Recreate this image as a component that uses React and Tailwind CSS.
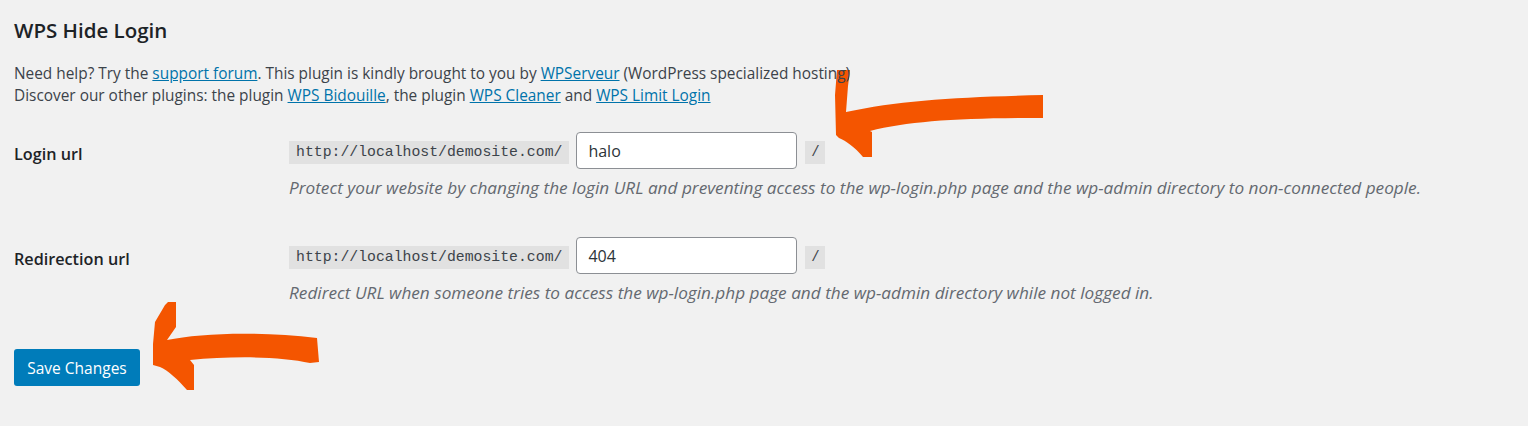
function UrlField({ value, description }) {
  return (
    <div className="flex flex-col">
      <div className="flex items-start">
        <code className="mt-[9px] h-[23px] bg-[#e1e1e1] px-[7px] font-['Liberation_Mono',monospace] text-[14.8px] leading-[23px] text-[#3c434a]">
          http://localhost/demosite.com/
        </code>
        <input
          type="text"
          defaultValue={value}
          className="ml-[7px] h-[37px] w-[221px] rounded-[4px] border border-[#8c8f94] bg-white px-[11px] text-[16px] text-[#2c3338] outline-none"
        />
        <code className="mt-[9px] ml-[8px] h-[23px] w-[20px] bg-[#e1e1e1] text-center font-['Liberation_Mono',monospace] text-[14px] leading-[23px] text-[#3c434a]">
          /
        </code>
      </div>
      <p className="mt-[8px] text-[17.2px] italic leading-[22px] text-[#646970]">{description}</p>
    </div>
  );
}

function Row({ label, children, className }) {
  return (
    <div className={"flex " + (className || "")}>
      <div className="w-[275px] shrink-0 pt-[12px] text-[16.2px] font-semibold leading-[20px] text-[#1d2327]">
        {label}
      </div>
      {children}
    </div>
  );
}

function Arrows() {
  return (
    <svg className="pointer-events-none absolute left-0 top-0" width="1528" height="426" viewBox="0 0 1528 426">
      {/* top arrow, pointing at the login field */}
      <path
        fill="#f45500"
        d="M837 70 L850 70 L848 86 L846 112 C 900 100, 960 97, 1043 95 L1043 118 C 960 118, 910 121, 870 131 L872 132 L872 157 L863 157 C 855 147, 846 141, 839 138 L836 135 L835 95 Z"
      />
      {/* bottom arrow, pointing at the button */}
      <path
        fill="#f45500"
        d="M168 302 L176 302 L176 327 L167 340 C 200 333, 260 331, 317 338 L319 362 L310 363 C 280 356, 230 356, 190 360 L194 365 L194 390 L187 390 C 178 380, 168 370, 160 367 L153 365 L153 344 L155 322 L165 305 Z"
      />
    </svg>
  );
}

export default function App() {
  return (
    <div className="relative min-h-[426px] w-full bg-[#f1f1f1] font-['Open_Sans',sans-serif] text-[#3c434a]">
      <Arrows />
      <div className="relative px-[14px] pt-[17px]">
        <h1 className="text-[20.5px] font-semibold leading-[27px] text-[#1d2327]">WPS Hide Login</h1>
        <p className="mt-[19px] text-[15.4px] leading-[22px]">
          Need help? Try the{" "}
          <a href="#" className="text-[#0073aa] underline">support forum</a>. This plugin is kindly brought to you by{" "}
          <a href="#" className="text-[#0073aa] underline">WPServeur</a> (WordPress specialized hosting)
          <br />
          Discover our other plugins: the plugin{" "}
          <a href="#" className="text-[#0073aa] underline">WPS Bidouille</a>, the plugin{" "}
          <a href="#" className="text-[#0073aa] underline">WPS Cleaner</a> and{" "}
          <a href="#" className="text-[#0073aa] underline">WPS Limit Login</a>
        </p>

        <Row label="Login url" className="mt-[25px]">
          <UrlField
            value="halo"
            description="Protect your website by changing the login URL and preventing access to the wp-login.php page and the wp-admin directory to non-connected people."
          />
        </Row>

        <Row label="Redirection url" className="mt-[38px]">
          <UrlField
            value="404"
            description="Redirect URL when someone tries to access the wp-login.php page and the wp-admin directory while not logged in."
          />
        </Row>

        <button className="mt-[45px] h-[37px] w-[126px] rounded-[3px] bg-[#007cba] pt-[2px] text-[15.5px] text-white">
          Save Changes
        </button>
      </div>
    </div>
  );
}
